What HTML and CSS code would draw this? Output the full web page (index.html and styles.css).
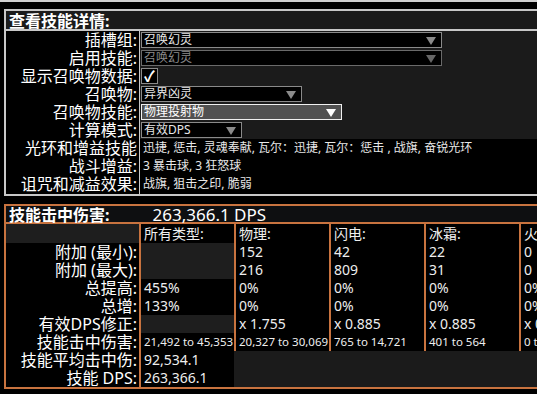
FILE: index.html
```html
<!DOCTYPE html>
<html lang="zh-CN">
<head>
    <meta charset="UTF-8">
    <title>技能详情</title>
    <link rel="stylesheet" href="styles.css">
</head>
<body>
    <div class="topline"></div>

    <!-- Skill details -->
    <section class="panel calc">
        <div class="panel-title">查看技能详情:</div>
        <div class="row ctl">
            <div class="lbl">插槽组:</div>
            <div class="val"><div class="dd w301">召唤幻灵<span class="arrow"></span></div></div>
        </div>
        <div class="row ctl">
            <div class="lbl">启用技能:</div>
            <div class="val"><div class="dd w301 disabled">召唤幻灵<span class="arrow"></span></div></div>
        </div>
        <div class="row ctl">
            <div class="lbl">显示召唤物数据:</div>
            <div class="val"><div class="check">&#10003;</div></div>
        </div>
        <div class="row ctl">
            <div class="lbl">召唤物:</div>
            <div class="val"><div class="dd w161">异界凶灵<span class="arrow"></span></div></div>
        </div>
        <div class="row ctl">
            <div class="lbl">召唤物技能:</div>
            <div class="val"><div class="dd w201 hover">物理投射物<span class="arrow"></span></div></div>
        </div>
        <div class="row ctl">
            <div class="lbl">计算模式:</div>
            <div class="val"><div class="dd w101">有效DPS<span class="arrow"></span></div></div>
        </div>
        <div class="row info">
            <div class="lbl">光环和增益技能</div>
            <div class="val">迅捷, 惩击, 灵魂奉献, 瓦尔：迅捷, 瓦尔：惩击 , 战旗, 奋锐光环</div>
        </div>
        <div class="row info">
            <div class="lbl">战斗增益:</div>
            <div class="val">3 暴击球, 3 狂怒球</div>
        </div>
        <div class="row info">
            <div class="lbl">诅咒和减益效果:</div>
            <div class="val">战旗, 狙击之印, 脆弱</div>
        </div>
    </section>

    <!-- Hit damage breakdown -->
    <section class="panel dmg">
        <div class="panel-title">技能击中伤害:<span class="dps">263,366.1 DPS</span></div>
        <div class="tbl">
            <div class="lbl head"></div>
            <div class="cell th">所有类型:</div>
            <div class="cell th">物理:</div>
            <div class="cell th">闪电:</div>
            <div class="cell th">冰霜:</div>
            <div class="cell th">火焰:</div>

            <div class="lbl">附加 (最小):</div>
            <div class="cell empty"></div>
            <div class="cell">152</div>
            <div class="cell">42</div>
            <div class="cell">22</div>
            <div class="cell">0</div>

            <div class="lbl">附加 (最大):</div>
            <div class="cell empty"></div>
            <div class="cell">216</div>
            <div class="cell">809</div>
            <div class="cell">31</div>
            <div class="cell">0</div>

            <div class="lbl">总提高:</div>
            <div class="cell">455%</div>
            <div class="cell">0%</div>
            <div class="cell">0%</div>
            <div class="cell">0%</div>
            <div class="cell">0%</div>

            <div class="lbl">总增:</div>
            <div class="cell">133%</div>
            <div class="cell">0%</div>
            <div class="cell">0%</div>
            <div class="cell">0%</div>
            <div class="cell">0%</div>

            <div class="lbl">有效DPS修正:</div>
            <div class="cell empty"></div>
            <div class="cell">x 1.755</div>
            <div class="cell">x 0.885</div>
            <div class="cell">x 0.885</div>
            <div class="cell">x 0.885</div>

            <div class="lbl">技能击中伤害:</div>
            <div class="cell small">21,492 to 45,353</div>
            <div class="cell small">20,327 to 30,069</div>
            <div class="cell small">765 to 14,721</div>
            <div class="cell small">401 to 564</div>
            <div class="cell small">0 to 0</div>

            <div class="lbl">技能平均击中伤:</div>
            <div class="cell">92,534.1</div>
            <div class="filler"></div>

            <div class="lbl">技能 DPS:</div>
            <div class="cell">263,366.1</div>
            <div class="filler"></div>
        </div>
    </section>
</body>
</html>
```
FILE: styles.css
```css
* {
    margin: 0;
    padding: 0;
    box-sizing: border-box;
}

body {
    background: #000;
    color: #fff;
    font-family: "Noto Sans", "Noto Sans CJK SC", sans-serif;
    width: 537px;
    height: 394px;
    overflow: hidden;
}

.topline {
    height: 9px;
    border-top: 2px solid #d0d0d0;
}

.panel {
    margin-left: 4px;
    width: 600px;
}

.panel-title {
    height: 20px;
    padding-left: 3px;
    font-size: 16px;
    font-weight: bold;
    line-height: 20px;
    white-space: nowrap;
}

/* ---------- top panel ---------- */

.calc {
    border: 2px solid #c8c8c8;
    background: #1b1b1b;
}

.calc .panel-title {
    border-bottom: 2px solid #c8c8c8;
}

.row {
    display: flex;
    height: 18px;
}

.row .lbl {
    width: 134px;
    flex: none;
    background: #000;
    border-right: 1px solid #c8c8c8;
    padding-right: 2px;
    text-align: right;
    font-size: 16px;
    line-height: 18px;
    white-space: nowrap;
}

.row .val {
    flex: 1;
    padding-left: 1px;
    padding-top: 1px;
    font-size: 12px;
    white-space: nowrap;
}

.row.info .val {
    background: #000;
    padding-left: 3px;
    padding-top: 0;
    line-height: 18px;
    color: #e8e8e8;
}

.row:last-child {
    height: 19px;
}

.dd {
    position: relative;
    height: 16px;
    border: 1px solid #8a8a8a;
    background: #000;
    padding-left: 2px;
    line-height: 14px;
    color: #e8e8e8;
}

.dd.disabled {
    color: #8a8a8a;
    border-color: #6a6a6a;
}

.dd.hover {
    background: #515151;
    border-color: #f0f0f0;
    color: #fff;
}

.arrow {
    position: absolute;
    right: 5px;
    top: 4px;
    width: 0;
    height: 0;
    border-left: 5px solid transparent;
    border-right: 5px solid transparent;
    border-top: 8px solid #8a8a8a;
}

.dd.disabled .arrow {
    border-top-color: #666;
}

.dd.hover .arrow {
    border-top-color: #fff;
}

.w301 { width: 301px; }
.w201 { width: 201px; }
.w161 { width: 161px; }
.w101 { width: 101px; }

.check {
    width: 17px;
    height: 16px;
    border: 1px solid #8a8a8a;
    background: #000;
    font-size: 15px;
    font-weight: bold;
    line-height: 14px;
    text-align: center;
}

/* ---------- damage panel ---------- */

.dmg {
    margin-top: 8px;
    border: 2px solid #c8733f;
    background: #0e0f11;
}

.dmg .panel-title {
    height: 18px;
    line-height: 17px;
    border-bottom: 2px solid #c8733f;
}

.dps {
    margin-left: 43px;
    font-size: 17px;
    font-weight: normal;
}

.tbl {
    display: grid;
    grid-template-columns: 133px repeat(5, 95px);
    grid-template-rows: 19px repeat(8, 18px);
    background: #000;
}

.tbl .lbl {
    text-align: right;
    padding-right: 2px;
    font-size: 16px;
    line-height: 18px;
    white-space: nowrap;
}

.tbl .lbl.head {
    background: #1e1e1e;
}

.cell {
    border-left: 2px solid #c8733f;
    padding-left: 3px;
    font-size: 14px;
    line-height: 18px;
    color: #eee;
    white-space: nowrap;
    overflow: hidden;
}

.cell.th {
    line-height: 20px;
}

.cell.empty {
    background: #1e1e1e;
}

.cell.small {
    font-size: 11.5px;
}

.filler {
    grid-column: 3 / -1;
    background: #1b1b1b;
}
```
